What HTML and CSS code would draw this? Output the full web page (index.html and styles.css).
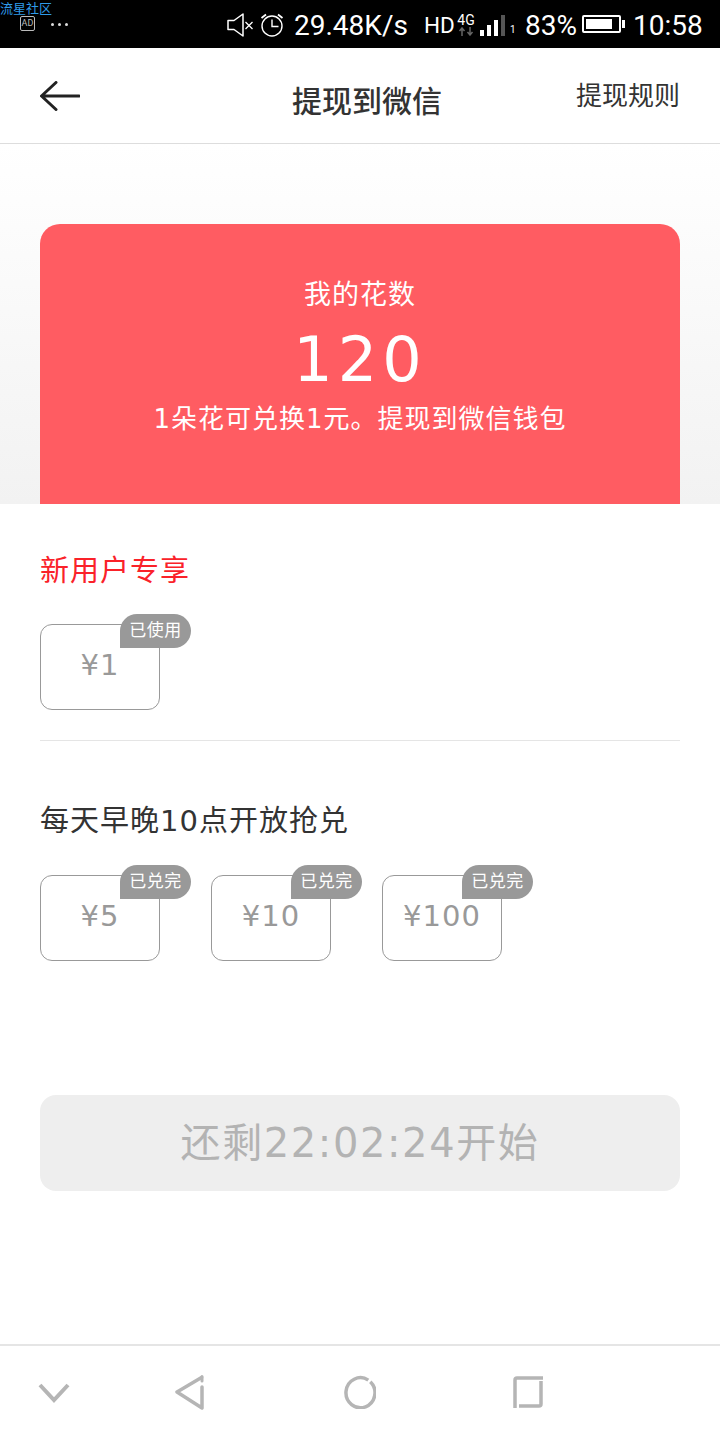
FILE: index.html
```html
<!DOCTYPE html>
<html lang="zh-CN">
<head>
<meta charset="utf-8">
<title>提现到微信</title>
<link rel="stylesheet" href="styles.css">
</head>
<body>
<div class="page">
  <div class="status">
    <span class="ad-name">流星社区</span>
    <div class="status-left">
      <span class="ad-box">AD</span>
      <span class="dots"><i></i><i></i><i></i></span>
    </div>
    <div class="status-right">
      <svg class="ic-mute" width="27" height="24" viewBox="0 0 27 24"><path d="M1 7.500h6l9-6.500v22l-9-6.500H1z" fill="none" stroke="#fff" stroke-width="1.500" stroke-linejoin="round"/><path d="M18.500 9l7 7M25.500 9l-7 7" stroke="#fff" stroke-width="1.300"/></svg>
      <svg class="ic-alarm" width="24" height="24" viewBox="0 0 24 24"><circle cx="12" cy="13" r="10" fill="none" stroke="#fff" stroke-width="1.400"/><path d="M12 6.500V13.500H18.500" fill="none" stroke="#fff" stroke-width="1.400"/><path d="M1.500 5L6 1.500M22.500 5L18 1.500" stroke="#fff" stroke-width="1.800"/></svg>
      <span class="speed">29.48K/s</span>
      <span class="hd">HD</span>
      <span class="net"><b>4G</b><svg width="16" height="9" viewBox="0 0 16 9"><path d="M4 9V2M1.500 4L4 1l2.500 3M12 0v7M9.500 5L12 8l2.500-3" fill="none" stroke="#666" stroke-width="1.500"/></svg></span>
      <span class="bars"><i class="b1"></i><i class="b2"></i><i class="b3"></i><i class="b4"></i></span>
      <span class="sim">1</span>
      <span class="pct">83%</span>
      <span class="battery"><span class="fill"></span></span>
      <span class="clock">10:58</span>
    </div>
  </div>

  <header class="topbar">
    <svg class="back" width="40" height="30" viewBox="0 0 40 30"><path d="M39 15H2M16 1.500L1.500 15 16 28.500" fill="none" stroke="#222" stroke-width="3" stroke-linecap="round" stroke-linejoin="round"/></svg>
    <h1 class="title">提现到微信</h1>
    <a class="rules">提现规则</a>
  </header>

  <section class="hero">
    <div class="card">
      <div class="card-label">我的花数</div>
      <div class="card-num">120</div>
      <div class="card-note">1朵花可兑换1元。提现到微信钱包</div>
    </div>
  </section>

  <section class="group group-first">
    <h2 class="group-title red">新用户专享</h2>
    <div class="coupons">
      <div class="coupon"><span class="price">¥1</span><span class="badge">已使用</span></div>
    </div>
  </section>

  <section class="group group-second">
    <h2 class="group-title">每天早晚10点开放抢兑</h2>
    <div class="coupons">
      <div class="coupon"><span class="price">¥5</span><span class="badge">已兑完</span></div>
      <div class="coupon"><span class="price">¥10</span><span class="badge">已兑完</span></div>
      <div class="coupon"><span class="price">¥100</span><span class="badge">已兑完</span></div>
    </div>
  </section>

  <div class="cta-wrap"><button class="cta">还剩22:02:24开始</button></div>

  <nav class="navbar">
    <svg class="n1" width="32" height="22" viewBox="0 0 32 22"><path d="M2 3l14 15L30 3" fill="none" stroke="#b5b5b5" stroke-width="4"/></svg>
    <svg class="n2" width="32" height="36" viewBox="0 0 32 36"><path d="M27.500 3.500L3 18l25 16V13" fill="none" stroke="#b5b5b5" stroke-width="3.500" stroke-linecap="round" stroke-linejoin="round"/><path d="M28 2.500V7" stroke="#b5b5b5" stroke-width="3" stroke-linecap="round"/></svg>
    <svg class="n3" width="32" height="34" viewBox="0 0 32 34"><path d="M26.300 6.700A14.500 15 0 1 1 24.300 5.100" fill="none" stroke="#b5b5b5" stroke-width="3.500"/></svg>
    <svg class="n4" width="30" height="32" viewBox="0 0 30 32"><path d="M30 2H4Q2 2 2 4V32M6 30H26Q28 30 28 28V5" fill="none" stroke="#b5b5b5" stroke-width="3.500"/></svg>
  </nav>
</div>
</body>
</html>
```
FILE: styles.css
```css
* { box-sizing: border-box; margin: 0; padding: 0; }
html, body { background: #fff; }
body { width: 720px; height: 1440px; overflow: hidden; font-family: "DejaVu Sans", "Noto Sans CJK SC", sans-serif; }
.page { position: relative; width: 720px; height: 1440px; display: flex; flex-direction: column; }

.status { position: relative; height: 48px; background: #000; color: #fff; display: flex; justify-content: space-between; font-family: Roboto, sans-serif; flex: none; }
.ad-name { position: absolute; left: 0; top: 0; font-size: 13px; line-height: 15px; color: #2f9be8; font-family: "Noto Sans CJK SC", sans-serif; }
.status-left { display: flex; align-items: flex-start; padding: 16px 0 0 20px; }
.ad-box { width: 15px; height: 15px; border: 1px solid #bbb; border-radius: 2px; color: #bbb; font-size: 9px; line-height: 13px; text-align: center; }
.dots { display: flex; gap: 4px; margin: 7px 0 0 16px; }
.dots i { width: 3px; height: 3px; background: #ddd; border-radius: 50%; }
.status-right { display: flex; align-items: center; padding: 2px 16px 0 0; }
.ic-mute { margin-right: 6px; }
.ic-alarm { margin-right: 10px; }
.speed { font-size: 28px; width: 115px; margin-right: 15px; white-space: nowrap; }
.hd { font-size: 22.500px; width: 29px; margin-right: 4px; }
.net { width: 18px; display: flex; flex-direction: column; align-items: center; margin-right: 5px; }
.net b { font-weight: 400; font-size: 14px; line-height: 13px; }
.bars { display: flex; align-items: flex-end; gap: 3px; height: 21px; }
.bars i { width: 4px; background: #fff; display: block; }
.bars .b1 { height: 6px; }
.bars .b2 { height: 11px; }
.bars .b3 { height: 16px; }
.bars .b4 { height: 21px; background: #555; }
.sim { font-size: 10px; align-self: flex-end; margin: 0 10px 13px 5px; width: 5px; line-height: 10px; }
.pct { font-size: 28px; width: 52px; margin-right: 5px; white-space: nowrap; }
.battery { position: relative; width: 39px; height: 18px; border: 2px solid #fff; border-radius: 2px; padding: 2px; margin: -2px 12px 0 0; }
.battery::after { content: ""; position: absolute; right: -6px; top: 3px; width: 3px; height: 8px; background: #fff; }
.fill { display: block; width: 83%; height: 100%; background: #fff; }
.clock { font-size: 28px; width: 71px; white-space: nowrap; }

.topbar { height: 96px; flex: none; border-bottom: 1px solid #ddd; background: #fff; display: flex; align-items: center; padding: 0 40px; }
.back { margin-top: 1px; }
.title { flex: 1; text-align: center; font-size: 30px; font-weight: 500; color: #333; line-height: 40px; margin: 6px 0 0 78px; font-family: "Noto Sans CJK SC", sans-serif; }
.rules { width: 104px; font-size: 26px; line-height: 34px; color: #333; text-align: right; white-space: nowrap; }

.hero { height: 360px; flex: none; padding: 80px 40px 0; background: linear-gradient(#fff, #f2f2f2); }
.card { height: 280px; background: #ff5c62; border-radius: 20px 20px 0 0; color: #fff; display: flex; flex-direction: column; align-items: center; padding-top: 52px; }
.card-label { font-size: 27px; letter-spacing: 1px; line-height: 38px; }
.card-num { font-size: 62px; line-height: 70px; margin-top: 11px; letter-spacing: 5px; }
.card-note { font-size: 26px; letter-spacing: 1px; line-height: 34px; margin-top: 7px; white-space: nowrap; }

.group { margin: 0 40px; flex: none; }
.group-first { padding-top: 45px; height: 237px; border-bottom: 1px solid #e5e5e5; }
.group-second { padding-top: 58px; }
.group-title { font-size: 29px; letter-spacing: 1px; font-weight: 400; line-height: 44px; color: #333; }
.red { color: #fa2229; }
.coupons { display: flex; gap: 51px; margin-top: 31px; }
.group-second .coupons { margin-top: 32px; }
.coupon { position: relative; width: 120px; height: 86px; border: 1px solid #999; border-radius: 12px; display: flex; justify-content: center; padding-top: 20px; }
.price { font-size: 29px; letter-spacing: 1px; line-height: 40px; color: #999; }
.badge { position: absolute; left: 79px; top: -11px; width: 71px; height: 34px; background: #999; color: #fff; border-radius: 17px 17px 17px 0; font-size: 17px; letter-spacing: .5px; line-height: 32px; text-align: center; }

.cta-wrap { margin: 134px 40px 0; flex: none; }
.cta { display: block; width: 100%; height: 96px; border: 0; border-radius: 16px; background: #eee; color: #b3b3b3; font-family: "DejaVu Sans", "Noto Sans CJK SC", sans-serif; font-size: 40px; letter-spacing: 1.600px; line-height: 96px; }

.navbar { position: absolute; left: 0; right: 0; bottom: 0; height: 96px; border-top: 2px solid #e5e5e5; background: #fff; }
.navbar svg { position: absolute; }
.n1 { left: 38px; top: 36px; }
.n2 { left: 174px; top: 28px; }
.n3 { left: 344px; top: 29px; }
.n4 { left: 513px; top: 30px; }
```
